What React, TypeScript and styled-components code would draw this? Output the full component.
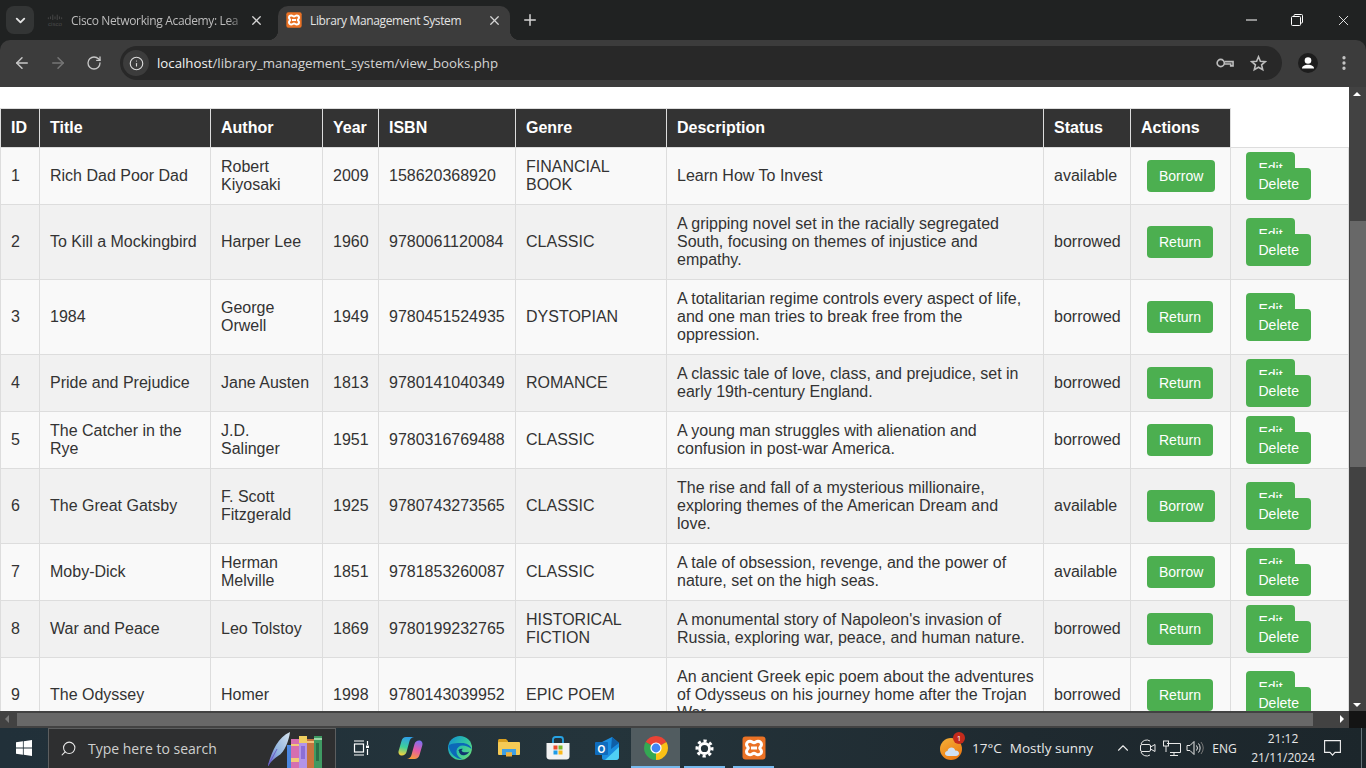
import React from "react";
import styled, { createGlobalStyle } from "styled-components";
import { ArrowLeft, ArrowRight, ChevronDown, ChevronUp, Info, MoreVertical, Plus, RotateCw, Search, X } from "lucide-react";

const uiFont = `"Open Sans", "Noto Sans", sans-serif`;

interface Book {
  id: number;
  title: string;
  author: string;
  year: number;
  isbn: string;
  genre: string;
  description: string;
  status: "available" | "borrowed";
}

const books: Book[] = [
  { id: 1, title: "Rich Dad Poor Dad", author: "Robert Kiyosaki", year: 2009, isbn: "158620368920", genre: "FINANCIAL BOOK", description: "Learn How To Invest", status: "available" },
  { id: 2, title: "To Kill a Mockingbird", author: "Harper Lee", year: 1960, isbn: "9780061120084", genre: "CLASSIC", description: "A gripping novel set in the racially segregated South, focusing on themes of injustice and empathy.", status: "borrowed" },
  { id: 3, title: "1984", author: "George Orwell", year: 1949, isbn: "9780451524935", genre: "DYSTOPIAN", description: "A totalitarian regime controls every aspect of life, and one man tries to break free from the oppression.", status: "borrowed" },
  { id: 4, title: "Pride and Prejudice", author: "Jane Austen", year: 1813, isbn: "9780141040349", genre: "ROMANCE", description: "A classic tale of love, class, and prejudice, set in early 19th-century England.", status: "borrowed" },
  { id: 5, title: "The Catcher in the Rye", author: "J.D. Salinger", year: 1951, isbn: "9780316769488", genre: "CLASSIC", description: "A young man struggles with alienation and confusion in post-war America.", status: "borrowed" },
  { id: 6, title: "The Great Gatsby", author: "F. Scott Fitzgerald", year: 1925, isbn: "9780743273565", genre: "CLASSIC", description: "The rise and fall of a mysterious millionaire, exploring themes of the American Dream and love.", status: "available" },
  { id: 7, title: "Moby-Dick", author: "Herman Melville", year: 1851, isbn: "9781853260087", genre: "CLASSIC", description: "A tale of obsession, revenge, and the power of nature, set on the high seas.", status: "available" },
  { id: 8, title: "War and Peace", author: "Leo Tolstoy", year: 1869, isbn: "9780199232765", genre: "HISTORICAL FICTION", description: "A monumental story of Napoleon's invasion of Russia, exploring war, peace, and human nature.", status: "borrowed" },
  { id: 9, title: "The Odyssey", author: "Homer", year: 1998, isbn: "9780143039952", genre: "EPIC POEM", description: "An ancient Greek epic poem about the adventures of Odysseus on his journey home after the Trojan War.", status: "borrowed" },
];

const columnWidths = [39, 171, 112, 56, 137, 151, 377, 87, 100, 118];
const headings = ["ID", "Title", "Author", "Year", "ISBN", "Genre", "Description", "Status", "Actions"];

const GlobalStyle = createGlobalStyle`
  html, body {
    margin: 0;
    padding: 0;
    height: 100%;
    overflow: hidden;
    background: #202222;
  }
`;

const Screen = styled.div`
  width: 1366px;
  height: 768px;
  display: flex;
  flex-direction: column;
  overflow: hidden;
  font-family: ${uiFont};
`;

/* browser frame */
const TabStrip = styled.div`
  height: 40px;
  flex: none;
  display: flex;
  align-items: flex-end;
  padding-left: 6px;
  background: #202222;
  color: #c7c7c7;
`;

const TabSearch = styled.div`
  width: 28px;
  height: 28px;
  margin-bottom: 6px;
  margin-right: 4px;
  border-radius: 8px;
  background: #333535;
  display: flex;
  align-items: center;
  justify-content: center;
  color: #e3e3e3;
`;

const Tab = styled.div<{ $active?: boolean }>`
  position: relative;
  height: 34px;
  box-sizing: border-box;
  display: flex;
  align-items: center;
  width: ${(p) => (p.$active ? "232px" : "240px")};
  padding: 0 ${(p) => (p.$active ? "8px" : "14px")} 6px ${(p) => (p.$active ? "8px" : "9px")};
  border-radius: 10px 10px 0 0;
  background: ${(p) => (p.$active ? "#3c3c3c" : "transparent")};
  color: ${(p) => (p.$active ? "#e4e4e4" : "#bdbdbd")};

  ${(p) =>
    p.$active &&
    `
    &::before, &::after {
      content: "";
      position: absolute;
      bottom: 0;
      width: 10px;
      height: 10px;
    }
    &::before {
      left: -10px;
      background: radial-gradient(circle at 0 0, transparent 10px, #3c3c3c 10.5px);
    }
    &::after {
      right: -10px;
      background: radial-gradient(circle at 100% 0, transparent 10px, #3c3c3c 10.5px);
    }
  `}
`;

const TabIcon = styled.div`
  width: 16px;
  height: 16px;
  flex: none;
  display: flex;
  align-items: center;
  justify-content: center;
`;

const TabTitle = styled.div<{ $fade?: boolean }>`
  flex: 1;
  min-width: 0;
  margin-left: 8px;
  font-size: 12px;
  letter-spacing: -0.35px;
  white-space: nowrap;
  overflow: hidden;
  ${(p) =>
    p.$fade &&
    `
    -webkit-mask-image: linear-gradient(to right, #000 88%, transparent 100%);
    mask-image: linear-gradient(to right, #000 88%, transparent 100%);
  `}
`;

const TabClose = styled.div`
  flex: none;
  width: 16px;
  height: 16px;
  display: flex;
  align-items: center;
  justify-content: center;
  color: #d5d5d5;
`;

const NewTab = styled.div`
  width: 28px;
  height: 28px;
  margin: 0 0 6px 6px;
  display: flex;
  align-items: center;
  justify-content: center;
  color: #d5d5d5;
`;

const WindowControls = styled.div`
  margin-left: auto;
  align-self: flex-start;
  display: flex;
`;

const WindowButton = styled.div`
  width: 46px;
  height: 40px;
  display: flex;
  align-items: center;
  justify-content: center;
  color: #fff;
`;

const Toolbar = styled.div`
  height: 47px;
  flex: none;
  box-sizing: border-box;
  display: flex;
  align-items: center;
  padding: 0 0 1px 4px;
  background: #3c3c3c;
  border-radius: 10px 10px 0 0;
  color: #c7c7c7;
`;

const NavButton = styled.div<{ $dim?: boolean }>`
  width: 36px;
  height: 34px;
  flex: none;
  display: flex;
  align-items: center;
  justify-content: center;
  color: ${(p) => (p.$dim ? "#767676" : "#c7c7c7")};
`;

const MenuButton = styled(NavButton)`
  margin-left: 8px;
`;

const AddressBar = styled.div`
  width: 1162px;
  height: 34px;
  flex: none;
  margin-left: 8px;
  box-sizing: border-box;
  display: flex;
  align-items: center;
  padding: 0 15px 0 3px;
  border-radius: 17px;
  background: #282828;
`;

const SiteInfo = styled.div`
  width: 26px;
  height: 26px;
  flex: none;
  border-radius: 50%;
  background: #3c3c3c;
  display: flex;
  align-items: center;
  justify-content: center;
  color: #dcdcdc;
`;

const Url = styled.div`
  flex: 1;
  margin-left: 8px;
  font-size: 13.25px;
  color: #d4d4d4;
  white-space: nowrap;
`;

const UrlHost = styled.span`
  color: #f2f2f2;
`;

const AddressIcon = styled.div`
  width: 18px;
  height: 18px;
  margin-left: 15px;
  display: flex;
  align-items: center;
  justify-content: center;
  color: #bdbdbd;
`;

const Avatar = styled.div`
  width: 20px;
  height: 20px;
  flex: none;
  margin-left: 16px;
  border-radius: 50%;
  background: #1d1d1d;
  overflow: hidden;
`;

/* page */
const PageRow = styled.div`
  height: 624px;
  flex: none;
  display: flex;
`;

const Viewport = styled.main`
  width: 1349px;
  flex: none;
  overflow: hidden;
  padding-top: 21px;
  box-sizing: border-box;
  background: #fff;
  font-family: "Liberation Sans", Arial, sans-serif;
  color: #333;
`;

const Table = styled.table`
  width: 1349px;
  table-layout: fixed;
  border-collapse: collapse;
  font-size: 16px;
  line-height: 18px;
`;

const HeadCell = styled.th`
  padding: 10px;
  border: 1px solid #ddd;
  background: #333;
  color: #fff;
  text-align: left;
  font-weight: bold;
`;

const Row = styled.tr`
  &:nth-child(odd) {
    background: #f9f9f9;
  }
  &:nth-child(even) {
    background: #f1f1f1;
  }
`;

const Cell = styled.td`
  padding: 10px;
  border: 1px solid #ddd;
`;

const DescriptionCell = styled(Cell)`
  padding-right: 8px;
`;

const ActionCell = styled(Cell)`
  font-size: 14px;
  line-height: 16px;
`;

const StatusButton = styled.button`
  display: block;
  margin-left: 6px;
  padding: 8px 12px;
  border: none;
  border-radius: 4px;
  background: #4caf50;
  color: #fff;
  font-family: "Liberation Sans", Arial, sans-serif;
  font-size: 14px;
  line-height: 16px;
`;

const ActionLink = styled.a`
  margin: 0 5px;
  padding: 8px 12.5px;
  border-radius: 4px;
  background: #4caf50;
  color: #fff;
`;

/* scrollbars */
const VerticalBar = styled.div`
  width: 17px;
  flex: none;
  position: relative;
  box-sizing: border-box;
  padding: 134px 0 0 1px;
  background: #424242;
`;

const BarThumbV = styled.div`
  height: 246px;
  background: #686868;
`;

const Arrow = styled.span<{ $dir: "up" | "down" | "left" | "right"; $dim?: boolean }>`
  position: absolute;
  width: 0;
  height: 0;
  border-style: solid;
  ${(p) => {
    const c = p.$dim ? "#7a7a7a" : "#fff";
    switch (p.$dir) {
      case "up":
        return `top: 5px; left: 4px; border-width: 0 4px 4px 4px; border-color: transparent transparent ${c} transparent;`;
      case "down":
        return `bottom: 4px; left: 4px; border-width: 4px 4px 0 4px; border-color: ${c} transparent transparent transparent;`;
      case "left":
        return `left: 5px; top: 4px; border-width: 4px 4px 4px 0; border-color: transparent ${c} transparent transparent;`;
      default:
        return `right: 5px; top: 4px; border-width: 4px 0 4px 4px; border-color: transparent transparent transparent ${c};`;
    }
  }}
`;

const HorizontalRow = styled.div`
  height: 17px;
  flex: none;
  display: flex;
`;

const HorizontalBar = styled.div`
  width: 1349px;
  flex: none;
  position: relative;
  box-sizing: border-box;
  padding: 2px 36px 2px 17px;
  background: #424242;
`;

const BarThumbH = styled.div`
  height: 13px;
  background: #686868;
`;

const BarCorner = styled.div`
  flex: 1;
  background: #141414;
`;

/* taskbar */
const Taskbar = styled.footer`
  height: 40px;
  flex: none;
  display: flex;
  align-items: stretch;
  background: linear-gradient(90deg, #213039 0%, #24343b 45%, #1f2a30 75%, #1c262b 100%);
  color: #e8e8e8;
  font-family: ${uiFont};
`;

const StartButton = styled.div`
  width: 48px;
  flex: none;
  display: flex;
  align-items: center;
  justify-content: center;
`;

const SearchBox = styled.div`
  width: 288px;
  flex: none;
  position: relative;
  box-sizing: border-box;
  display: flex;
  align-items: center;
  padding-left: 11px;
  background: #2e2f30;
  border: 1px solid #5c5e5f;
  border-bottom: none;
  font-size: 14px;
  color: #cfcfcf;
  overflow: hidden;
`;

const SearchGlass = styled(Search)`
  transform: scaleX(-1);
  margin-right: 11px;
  color: #e6e6e6;
`;

const SearchArt = styled.svg`
  position: absolute;
  left: 219px;
  top: 0;
`;

const TaskStrip = styled.div`
  display: flex;
  padding-left: 1px;
`;

const TaskButton = styled.div<{ $active?: boolean; $open?: boolean }>`
  width: 49px;
  flex: none;
  position: relative;
  display: flex;
  align-items: center;
  justify-content: center;
  background: ${(p) => (p.$active ? "#515c60" : "transparent")};

  ${(p) =>
    p.$open &&
    `
    &::after {
      content: "";
      position: absolute;
      bottom: 0;
      left: ${p.$active ? "0" : "4px"};
      right: ${p.$active ? "0" : "4px"};
      height: 2px;
      background: #76b9ed;
    }
  `}
`;

const Weather = styled.div`
  margin-left: auto;
  margin-right: 18px;
  display: flex;
  align-items: center;
  font-size: 13.5px;
`;

const WeatherIcon = styled.div`
  position: relative;
  width: 22px;
  height: 22px;
  margin-right: 10px;
`;

const WeatherBadge = styled.span`
  position: absolute;
  top: -5px;
  right: -3px;
  width: 12px;
  height: 12px;
  border-radius: 50%;
  background: #c42b1c;
  color: #fff;
  font-size: 8px;
  line-height: 12px;
  text-align: center;
`;

const WeatherTemp = styled.span`
  margin-right: 8px;
`;

const TraySlot = styled.div<{ $w: number }>`
  width: ${(p) => p.$w}px;
  flex: none;
  display: flex;
  align-items: center;
  justify-content: center;
  color: #e8e8e8;
`;

const LangLabel = styled(TraySlot)`
  font-size: 12px;
`;

const Clock = styled.div`
  width: 80px;
  flex: none;
  display: flex;
  flex-direction: column;
  align-items: center;
  justify-content: center;
  gap: 2px;
  font-size: 12px;
  line-height: 17px;
`;

const ShowDesktop = styled.div`
  width: 4px;
  margin-left: 20px;
  flex: none;
  border-left: 1px solid #66747a;
`;

/* icon drawings */
function XamppIcon({ size }: { size: number }) {
  return (
    <svg width={size} height={size} viewBox="0 0 24 24">
      <rect x="0.5" y="0.5" width="23" height="23" rx="3" fill="#ea7225" />
      <path
        d="M8 5.2c1.9 0 2.4 1.5 4 1.5s2.100-1.500 4-1.500c2.100 0 3.500 1.500 3.500 3.400 0 1.900-1.800 2.300-1.800 3.400s1.800 1.500 1.800 3.400c0 1.900-1.400 3.400-3.500 3.400-1.900 0-2.400-1.500-4-1.500s-2.100 1.500-4 1.500c-2.100 0-3.500-1.500-3.500-3.400 0-1.900 1.800-2.300 1.800-3.400S4.500 10.500 4.500 8.600c0-1.900 1.400-3.400 3.500-3.400z"
        fill="none"
        stroke="#fff"
        strokeWidth="3"
      />
      <path d="M9 12h6" stroke="#fff" strokeWidth="3" />
    </svg>
  );
}

function CiscoIcon() {
  return (
    <svg width="18" height="14" viewBox="0 0 18 14">
      <g stroke="#4a4a4a" strokeWidth="1">
        <path d="M1 4v2M3.500 3v3M6 1v6M8.500 3v3M11 1v6M13.500 3v3M16 4v2" transform="translate(0.500 0)" />
      </g>
      <text x="9" y="13.500" textAnchor="middle" fontSize="7" fontFamily="Liberation Sans" fill="#4a4a4a">
        cisco
      </text>
    </svg>
  );
}

function RestoreIcon() {
  return (
    <svg width="12" height="12" viewBox="0 0 12 12" fill="none" stroke="#fff" strokeWidth="1">
      <rect x="0.500" y="2.500" width="9" height="9" rx="1" />
      <path d="M3 2.500V1.500a1 1 0 0 1 1-1h6.500a1 1 0 0 1 1 1V8a1 1 0 0 1-1 1h-1" />
    </svg>
  );
}

function KeyIcon() {
  return (
    <svg width="19" height="12" viewBox="0 0 19 12" fill="none" stroke="currentColor" strokeWidth="1.700">
      <circle cx="5" cy="6" r="3.800" />
      <path d="M9 4.500h9v4.500h-2.500V7H9" />
    </svg>
  );
}

function StarIcon() {
  return (
    <svg width="17" height="17" viewBox="0 0 17 17" fill="none" stroke="currentColor" strokeWidth="1.600">
      <path d="M8.500 1.800 10.400 6.300 15.300 6.700 11.600 9.900 12.700 14.700 8.500 12.200 4.300 14.700 5.400 9.900 1.700 6.700 6.600 6.300z" />
    </svg>
  );
}

function AvatarIcon() {
  return (
    <svg width="20" height="20" viewBox="0 0 20 20" fill="#fff">
      <circle cx="10" cy="7.500" r="3.300" />
      <path d="M4 15.500c0-2.500 3-3.700 6-3.700s6 1.200 6 3.700z" />
    </svg>
  );
}

function WindowsLogo() {
  return (
    <svg width="16" height="16" viewBox="0 0 16 16" fill="#fff">
      <path d="M0 2.300 6.900 1.300V7.600H0zM7.700 1.200 16 0V7.600H7.700zM0 8.400H6.900V14.700L0 13.700zM7.700 8.400H16V16L7.700 14.800z" />
    </svg>
  );
}

function BooksArt() {
  return (
    <SearchArt width="60" height="40" viewBox="0 0 60 40">
      <defs>
        <linearGradient id="quill" x1="0" y1="1" x2="1" y2="0">
          <stop offset="0" stopColor="#6a5fc9" />
          <stop offset="0.4" stopColor="#8fb3de" />
          <stop offset="1" stopColor="#d6e3ee" />
        </linearGradient>
      </defs>
      <path d="M0 36C4 22 10 8 22 3c-1 8-5 20-12 24-3 2-6 5-10 9z" fill="url(#quill)" />
      <path d="M0 37 9 20" stroke="#6a5fc9" strokeWidth="1" />
      <rect x="19" y="16" width="4" height="24" fill="#4a86e0" />
      <rect x="23" y="10" width="8" height="30" fill="#d56fb0" />
      <rect x="23" y="15" width="8" height="2" fill="#f2c977" />
      <rect x="23" y="29" width="8" height="4" fill="#f2c977" />
      <rect x="31" y="7" width="8" height="33" fill="#b294e8" />
      <rect x="31" y="7" width="8" height="7" fill="#f0cf5f" />
      <rect x="33" y="17" width="4" height="13" fill="#8c6fd6" />
      <rect x="39" y="10" width="7" height="30" fill="#c6743f" />
      <rect x="39" y="12" width="7" height="2" fill="#f0c07a" />
      <rect x="46" y="7" width="8" height="33" fill="#3f9a62" />
      <rect x="46" y="9" width="8" height="2" fill="#9ad6a8" />
      <rect x="48" y="14" width="3" height="18" fill="#2a6f49" />
    </SearchArt>
  );
}

function TaskViewIcon() {
  return (
    <svg width="17" height="16" viewBox="0 0 17 16" fill="none" stroke="#fff" strokeWidth="1.200">
      <path d="M1 1h10M1 15h10" />
      <rect x="1.500" y="4" width="9" height="8" />
      <path d="M14.500 1v4M14.500 9v6" />
      <rect x="13" y="5.500" width="3" height="2.500" fill="#fff" stroke="none" />
    </svg>
  );
}

function CopilotIcon() {
  return (
    <svg width="25" height="24" viewBox="0 0 25 24">
      <defs>
        <linearGradient id="copA" x1="0.500" y1="0" x2="0.300" y2="1">
          <stop offset="0" stopColor="#2f9fe8" />
          <stop offset="0.550" stopColor="#3ecf9a" />
          <stop offset="1" stopColor="#f6d33c" />
        </linearGradient>
        <linearGradient id="copB" x1="0.700" y1="0" x2="0.400" y2="1">
          <stop offset="0" stopColor="#7d6ff0" />
          <stop offset="0.500" stopColor="#e65aa8" />
          <stop offset="1" stopColor="#f79a3c" />
        </linearGradient>
      </defs>
      <path d="M8 1h8c-2.500.5-4 2-4.600 4.500L8.500 16c-.6 2-2.300 3.500-4.500 3.500C1.500 19.500 0 17.500.6 15L3.500 5C4.200 2.500 5.800 1 8 1z" fill="url(#copA)" />
      <path d="M16.500 23H9c2.500-.5 4-2 4.600-4.500L16.500 8c.6-2 2.300-3.500 4.500-3.500 2.500 0 4 2 3.400 4.500L21.500 19c-.7 2.500-2.800 4-5 4z" fill="url(#copB)" />
    </svg>
  );
}

function EdgeIcon() {
  return (
    <svg width="24" height="24" viewBox="0 0 24 24">
      <defs>
        <linearGradient id="edgeTop" x1="0" y1="0" x2="1" y2="0.800">
          <stop offset="0" stopColor="#0f8ad8" />
          <stop offset="0.550" stopColor="#2ec3a4" />
          <stop offset="1" stopColor="#66dc7c" />
        </linearGradient>
      </defs>
      <circle cx="12" cy="12" r="12" fill="url(#edgeTop)" />
      <path d="M0.500 10C2 17 7 23 15 23.500c-4-1.500-7-5-6.500-9 .5-3 3-5 6-5 3.500 0 6 1.500 9 3.500-.5-4-6-6-9-6C8 7 3 7 .5 10z" fill="#0c68b8" />
      <path d="M11 15c0 3 3 5 6 4 2-.5 3.500-2 4.500-3.500-2 1-5 1.200-7 .2-1.500-.7-1-2 .5-2.700-2-.6-4.500.2-4.500 2z" fill="#12356e" />
    </svg>
  );
}

function ExplorerIcon() {
  return (
    <svg width="22" height="18" viewBox="0 0 22 18">
      <path d="M0 1.500C0 .7.700 0 1.500 0H8l2 2h0v2H0z" fill="#d89f1f" />
      <rect x="0" y="3" width="22" height="13" rx="1" fill="#f5ca55" />
      <path d="M4 16V10h14v6h-4v-2.500H8V16z" fill="#3f9fe4" />
      <rect x="8" y="13.500" width="6" height="4" fill="#f2b13a" />
    </svg>
  );
}

function StoreIcon() {
  return (
    <svg width="24" height="24" viewBox="0 0 24 24">
      <path d="M7 7V3.500C7 2 8 1 9.500 1h5C16 1 17 2 17 3.500V7" fill="none" stroke="#27a3e4" strokeWidth="1.800" />
      <path d="M0.500 7h23v13.500c0 1.700-1.300 3-3 3h-17c-1.700 0-3-1.300-3-3z" fill="#f2f2f2" />
      <rect x="7.500" y="9.500" width="4" height="4" fill="#ee4b2b" />
      <rect x="12.500" y="9.500" width="4" height="4" fill="#7ab928" />
      <rect x="7.500" y="14.500" width="4" height="4" fill="#1d9be8" />
      <rect x="12.500" y="14.500" width="4" height="4" fill="#fbb91a" />
    </svg>
  );
}

function OutlookIcon() {
  return (
    <svg width="24" height="23" viewBox="0 0 24 23">
      <path d="M7 5 17 0l7 6v14c0 1.700-1.300 3-3 3H9c-1.100 0-2-.9-2-2z" fill="#1a8ee0" />
      <path d="M10 23 24 10v10c0 1.700-1.300 3-3 3z" fill="#4fd0f5" />
      <path d="M17 0l7 6-8 6z" fill="#0f5fa8" />
      <rect x="0" y="5" width="13" height="13" rx="1" fill="#0f6cbd" />
      <text x="6.500" y="15.500" textAnchor="middle" fontSize="10" fontWeight="bold" fontFamily="Liberation Sans" fill="#fff">
        O
      </text>
    </svg>
  );
}

function ChromeIcon() {
  return (
    <svg width="24" height="24" viewBox="0 0 24 24">
      <path d="M12 12 1.610 6A12 12 0 0 1 22.390 6z" fill="#ea4335" />
      <path d="M12 12 22.390 6A12 12 0 0 1 12 24z" fill="#fbc116" />
      <path d="M12 12 12 24A12 12 0 0 1 1.610 6z" fill="#34a853" />
      <circle cx="12" cy="12" r="5.600" fill="#fff" />
      <circle cx="12" cy="12" r="4.400" fill="#4285f4" />
    </svg>
  );
}

function GearIcon() {
  return (
    <svg width="19" height="19" viewBox="0 0 20 20" fill="none" stroke="#fff">
      <circle cx="10" cy="10" r="5.300" strokeWidth="3" />
      <circle cx="10" cy="10" r="8" strokeWidth="3" strokeDasharray="3.300 3" transform="rotate(-10 10 10)" />
    </svg>
  );
}

function WeatherDrawing() {
  return (
    <svg width="22" height="24" viewBox="0 0 22 24">
      <defs>
        <linearGradient id="sun" x1="0" y1="0" x2="0.600" y2="1">
          <stop offset="0" stopColor="#f4b23a" />
          <stop offset="1" stopColor="#ec7a12" />
        </linearGradient>
      </defs>
      <circle cx="11" cy="12" r="11" fill="url(#sun)" />
      <path d="M8 19c-2 0-3-1-3-2.500S6.200 14 7.500 14c.3-2 2-3.500 4-3.500s3.300 1.300 3.700 3c2-.3 3.800 1 3.800 2.800S17.500 19 16 19z" fill="#cfe0f3" />
    </svg>
  );
}

function MeetIcon() {
  return (
    <svg width="18" height="18" viewBox="0 0 18 18" fill="none" stroke="#e8e8e8" strokeWidth="1">
      <path d="M2 5a6 6 0 0 1 9-3M2 13a6 6 0 0 0 9 3" />
      <rect x="1.500" y="5.500" width="10" height="7" rx="1.500" />
      <path d="M11.500 8 16 5.500v7L11.500 10" />
    </svg>
  );
}

function NetworkIcon() {
  return (
    <svg width="18" height="16" viewBox="0 0 18 16" fill="none" stroke="#e8e8e8" strokeWidth="1">
      <path d="M4 3.500h13.500v9H7" />
      <rect x="0.500" y="1" width="5" height="5" />
      <path d="M3 6v6M11 12.500V15M7 15.500h8" />
    </svg>
  );
}

function VolumeIcon() {
  return (
    <svg width="18" height="16" viewBox="0 0 18 16" fill="none" stroke="#e8e8e8" strokeWidth="1">
      <path d="M1 5.500h3L8 1.500v13l-4-4H1z" />
      <path d="M10.500 5.500a4 4 0 0 1 0 5M12.500 3.500a7 7 0 0 1 0 9" />
      <path d="M15 2a10 10 0 0 1 0 12" stroke="#777" />
    </svg>
  );
}

function NotificationIcon() {
  return (
    <svg width="17" height="16" viewBox="0 0 17 16" fill="none" stroke="#f0f0f0" strokeWidth="1.100">
      <path d="M.6.600h15.800v11.800H11l-2.500 2.800L6 12.400H.6z" />
    </svg>
  );
}

function BookRow({ book }: { book: Book }) {
  return (
    <Row>
      <Cell>{book.id}</Cell>
      <Cell>{book.title}</Cell>
      <Cell>{book.author}</Cell>
      <Cell>{book.year}</Cell>
      <Cell>{book.isbn}</Cell>
      <Cell>{book.genre}</Cell>
      <DescriptionCell>{book.description}</DescriptionCell>
      <Cell>{book.status}</Cell>
      <ActionCell>
        <StatusButton>{book.status === "available" ? "Borrow" : "Return"}</StatusButton>
      </ActionCell>
      <ActionCell>
        <ActionLink>Edit</ActionLink> <ActionLink>Delete</ActionLink>
      </ActionCell>
    </Row>
  );
}

export default function App() {
  return (
    <Screen>
      <GlobalStyle />
      <TabStrip>
        <TabSearch>
          <ChevronDown size={15} strokeWidth={3} />
        </TabSearch>
        <Tab>
          <TabIcon>
            <CiscoIcon />
          </TabIcon>
          <TabTitle $fade>Cisco Networking Academy: Lea</TabTitle>
          <TabClose>
            <X size={15} strokeWidth={2} />
          </TabClose>
        </Tab>
        <Tab $active>
          <TabIcon>
            <XamppIcon size={16} />
          </TabIcon>
          <TabTitle>Library Management System</TabTitle>
          <TabClose>
            <X size={15} strokeWidth={2} />
          </TabClose>
        </Tab>
        <NewTab>
          <Plus size={18} strokeWidth={2} />
        </NewTab>
        <WindowControls>
          <WindowButton>
            <svg width="11" height="2" viewBox="0 0 11 2">
              <path d="M0 1h11" stroke="#fff" />
            </svg>
          </WindowButton>
          <WindowButton>
            <RestoreIcon />
          </WindowButton>
          <WindowButton>
            <X size={17} strokeWidth={1.200} />
          </WindowButton>
        </WindowControls>
      </TabStrip>
      <Toolbar>
        <NavButton>
          <ArrowLeft size={18} strokeWidth={2} />
        </NavButton>
        <NavButton $dim>
          <ArrowRight size={18} strokeWidth={2} />
        </NavButton>
        <NavButton>
          <RotateCw size={16} strokeWidth={2} />
        </NavButton>
        <AddressBar>
          <SiteInfo>
            <Info size={15} strokeWidth={1.800} />
          </SiteInfo>
          <Url>
            <UrlHost>localhost</UrlHost>/library_management_system/view_books.php
          </Url>
          <AddressIcon>
            <KeyIcon />
          </AddressIcon>
          <AddressIcon>
            <StarIcon />
          </AddressIcon>
        </AddressBar>
        <Avatar>
          <AvatarIcon />
        </Avatar>
        <MenuButton>
          <MoreVertical size={18} strokeWidth={2.400} />
        </MenuButton>
      </Toolbar>
      <PageRow>
        <Viewport>
          <Table>
            <colgroup>
              {columnWidths.map((w, i) => (
                <col key={i} width={w} />
              ))}
            </colgroup>
            <thead>
              <tr>
                {headings.map((h) => (
                  <HeadCell key={h}>{h}</HeadCell>
                ))}
              </tr>
            </thead>
            <tbody>
              {books.map((book) => (
                <BookRow key={book.id} book={book} />
              ))}
            </tbody>
          </Table>
        </Viewport>
        <VerticalBar>
          <Arrow $dir="up" />
          <BarThumbV />
          <Arrow $dir="down" />
        </VerticalBar>
      </PageRow>
      <HorizontalRow>
        <HorizontalBar>
          <Arrow $dir="left" $dim />
          <BarThumbH />
          <Arrow $dir="right" />
        </HorizontalBar>
        <BarCorner />
      </HorizontalRow>
      <Taskbar>
        <StartButton>
          <WindowsLogo />
        </StartButton>
        <SearchBox>
          <SearchGlass size={17} strokeWidth={1.500} />
          Type here to search
          <BooksArt />
        </SearchBox>
        <TaskStrip>
          <TaskButton>
            <TaskViewIcon />
          </TaskButton>
          <TaskButton>
            <CopilotIcon />
          </TaskButton>
          <TaskButton>
            <EdgeIcon />
          </TaskButton>
          <TaskButton>
            <ExplorerIcon />
          </TaskButton>
          <TaskButton>
            <StoreIcon />
          </TaskButton>
          <TaskButton>
            <OutlookIcon />
          </TaskButton>
          <TaskButton $active $open>
            <ChromeIcon />
          </TaskButton>
          <TaskButton $open>
            <GearIcon />
          </TaskButton>
          <TaskButton $open>
            <XamppIcon size={24} />
          </TaskButton>
        </TaskStrip>
        <Weather>
          <WeatherIcon>
            <WeatherDrawing />
            <WeatherBadge>1</WeatherBadge>
          </WeatherIcon>
          <WeatherTemp>17°C</WeatherTemp>
          Mostly sunny
        </Weather>
        <TraySlot $w={24}>
          <ChevronUp size={18} strokeWidth={1.500} />
        </TraySlot>
        <TraySlot $w={25}>
          <MeetIcon />
        </TraySlot>
        <TraySlot $w={24}>
          <NetworkIcon />
        </TraySlot>
        <TraySlot $w={22}>
          <VolumeIcon />
        </TraySlot>
        <LangLabel $w={37}>ENG</LangLabel>
        <Clock>
          <span>21:12</span>
          <span>21/11/2024</span>
        </Clock>
        <TraySlot $w={18}>
          <NotificationIcon />
        </TraySlot>
        <ShowDesktop />
      </Taskbar>
    </Screen>
  );
}
